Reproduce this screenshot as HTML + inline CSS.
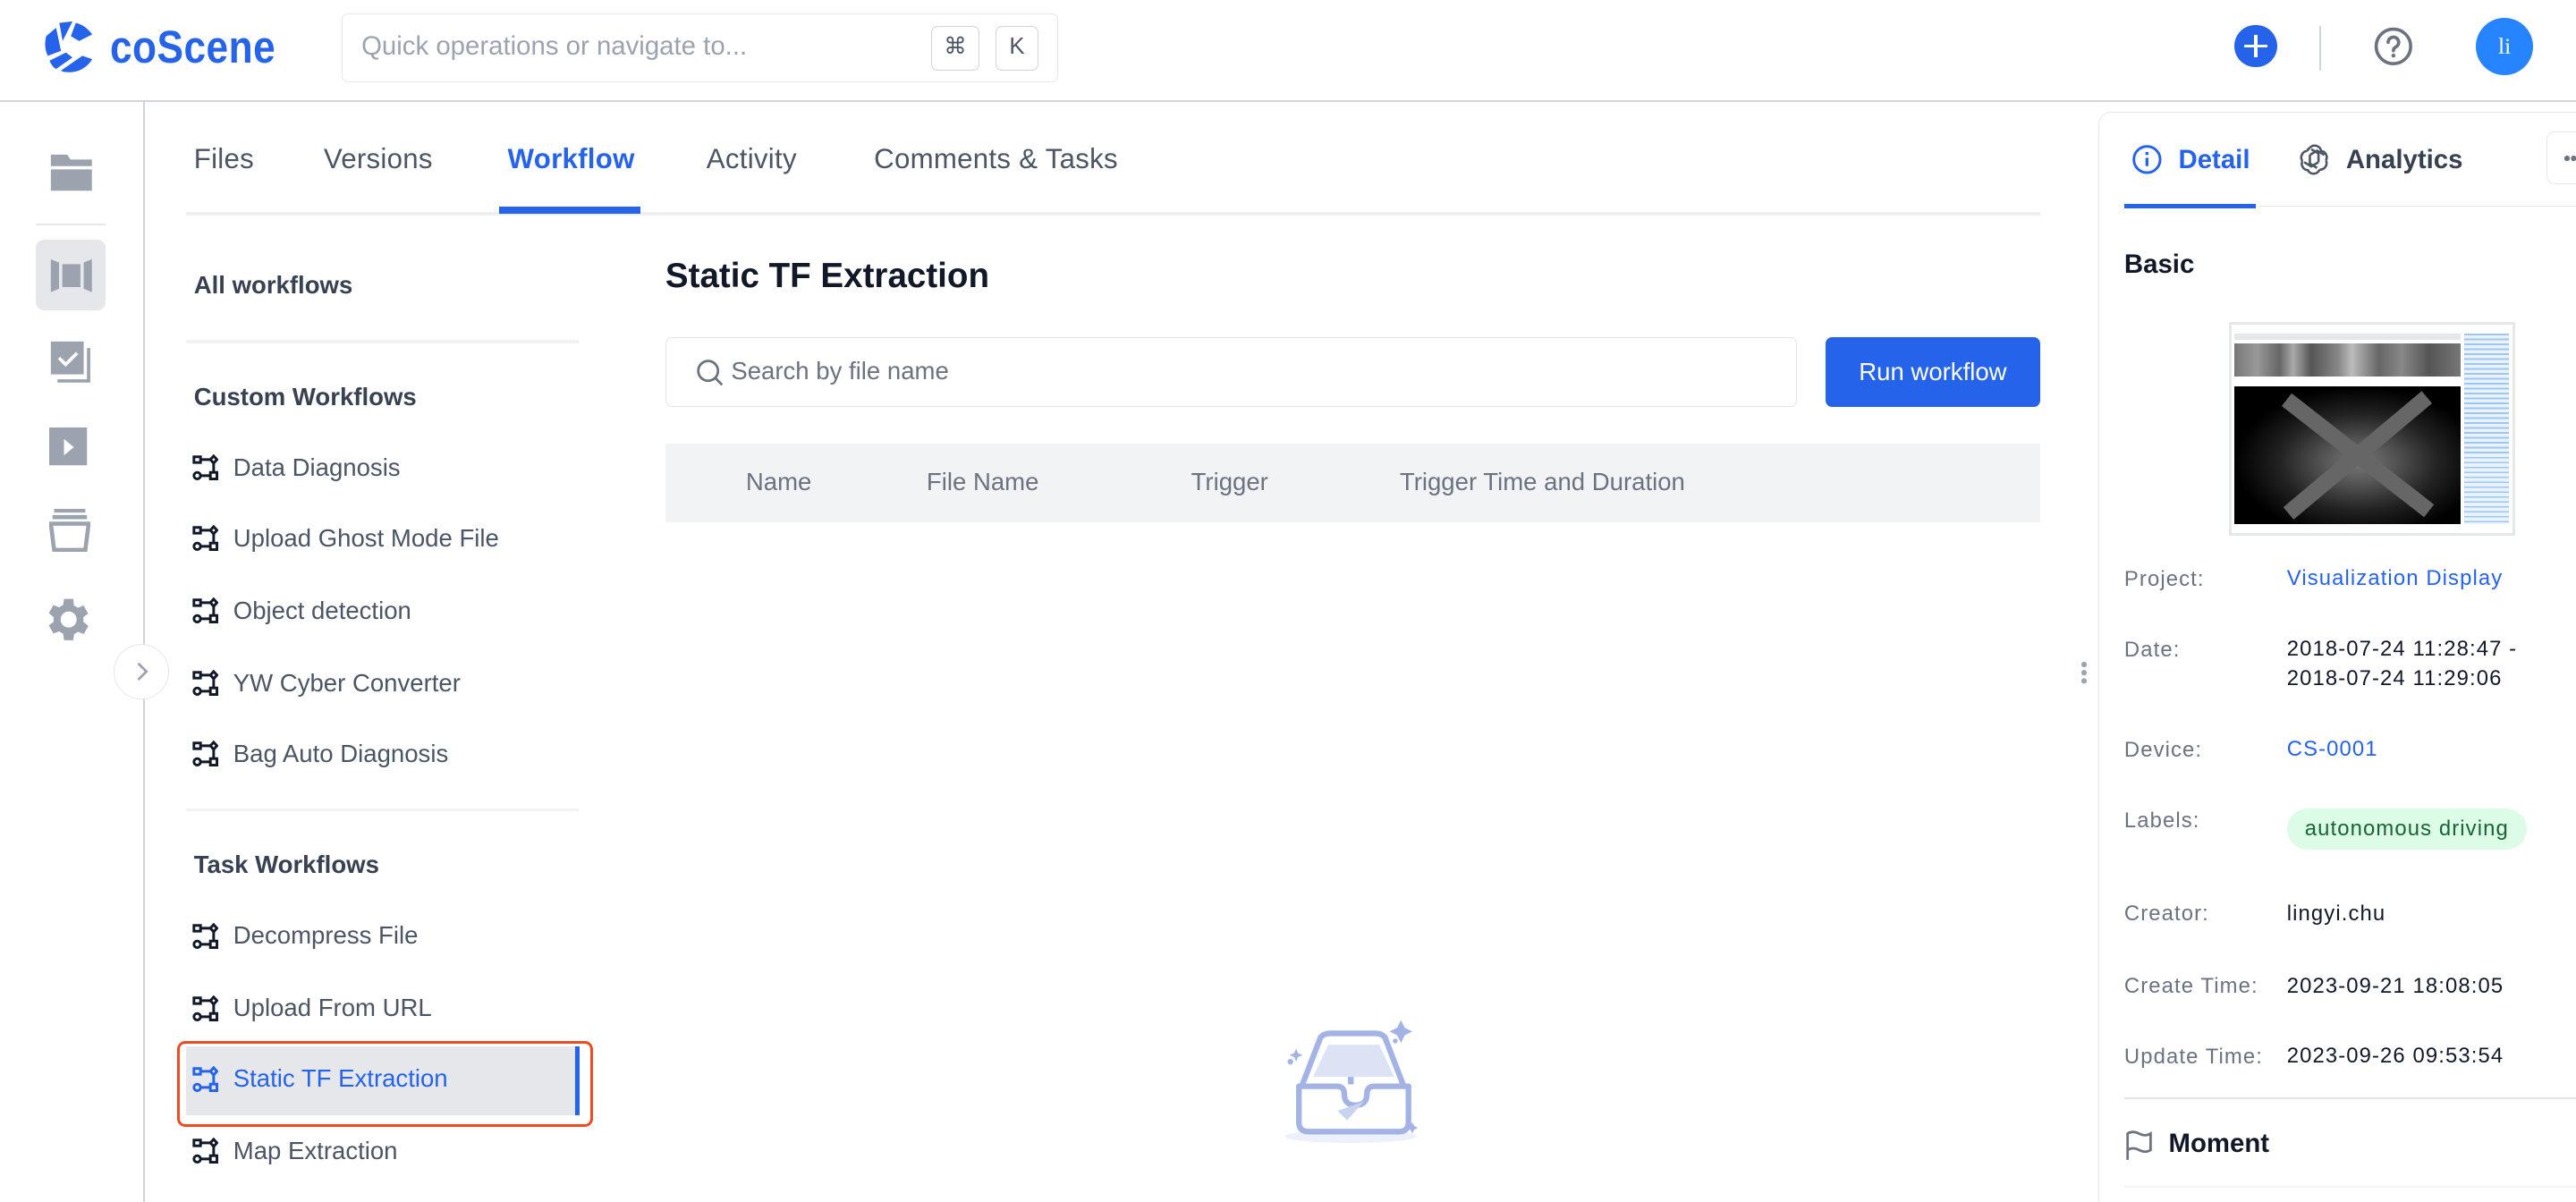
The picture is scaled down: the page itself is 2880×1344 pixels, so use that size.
<!DOCTYPE html>
<html><head><meta charset="utf-8"><style>
*{box-sizing:border-box;margin:0;padding:0}
html,body{width:2880px;height:1344px;overflow:hidden;background:#fff}
#r{zoom:1.836735;width:1568px;height:732px;position:relative;font-family:"Liberation Sans",Arial,sans-serif;color:#374151}
.a{position:absolute;white-space:nowrap}
.tab{position:absolute;top:87px;font-size:17px;color:#4b5563;letter-spacing:.15px}
.it{position:absolute;left:117px;font-size:15px;color:#4b5563;display:flex;align-items:center;gap:9px}
.hd{position:absolute;left:118px;font-size:15px;font-weight:bold;color:#374151}
.lb{position:absolute;left:1293px;font-size:13px;color:#6b7280;letter-spacing:.6px}
.v{position:absolute;left:1392px;font-size:13px;color:#111827;letter-spacing:.6px;line-height:18px}
.th{position:absolute;top:285px;font-size:15px;color:#6b7280}
</style></head><body><div id="r">
<svg class="a" style="left:26px;top:12px" width="32" height="33" viewBox="0 0 32 33"><path d="M10 2 L18 1 L12 13 Z M20 2 C24 3 27 5 30 9 L22 13 L17 10 Z M2 10 L8 5 L11 19 L3 22 C1 18 1 14 2 10 Z M4 25 L14 20 L18 23 L8 30 C6 29 5 27 4 25 Z M11 31 L24 22 L30 24 C27 29 22 32 16 32 C14 32 12 32 11 31 Z" fill="#2563eb"/></svg>
<div class="a" style="left:67px;top:12px;font-size:28px;font-weight:bold;color:#2563eb;transform:scaleX(.86);transform-origin:left;letter-spacing:.3px">coScene</div>
<div class="a" style="left:208px;top:8px;width:436px;height:42px;border:1px solid #e5e7eb;border-radius:4px"></div>
<div class="a" style="left:220px;top:19px;font-size:16px;color:#9ca3af">Quick operations or navigate to...</div>
<div class="a" style="left:567px;top:16px;width:29px;height:27px;border:1px solid #d1d5db;border-radius:4px;text-align:center;font-size:14px;line-height:25px;color:#4b5563">⌘</div>
<div class="a" style="left:606px;top:16px;width:26px;height:27px;border:1px solid #d1d5db;border-radius:4px;text-align:center;font-size:14px;line-height:25px;color:#4b5563">K</div>
<div class="a" style="left:1360px;top:15px;width:26px;height:26px;border-radius:50%;background:#2563eb"></div>
<div class="a" style="left:1366px;top:27px;width:14px;height:2px;background:#fff"></div>
<div class="a" style="left:1372px;top:21px;width:2px;height:14px;background:#fff"></div>
<div class="a" style="left:1412px;top:16px;width:1px;height:27px;background:#d1d5db"></div>
<svg class="a" style="left:1444px;top:15px" width="26" height="26" viewBox="0 0 26 26"><circle cx="13" cy="13" r="10.5" fill="none" stroke="#6b7280" stroke-width="2"/><path d="M9.8 10.5a3.2 3.2 0 1 1 4.6 2.9c-1 .5-1.4 1.1-1.4 2.2" fill="none" stroke="#6b7280" stroke-width="2" stroke-linecap="round"/><circle cx="13" cy="18.6" r="1.2" fill="#6b7280"/></svg>
<div class="a" style="left:1507px;top:11px;width:35px;height:35px;border-radius:50%;background:#2684ff;color:#fff;text-align:center;line-height:35px;font-family:'Liberation Serif',serif;font-size:14px">li</div>
<div class="a" style="left:0;top:61px;width:1568px;height:1px;background:#d1d5db"></div>
<div class="a" style="left:87px;top:62px;width:1px;height:670px;background:#d1d5db"></div>
<svg class="a" style="left:30px;top:93px" width="27" height="24"><path d="M1 1h10l2 3h13v4H1z M1 10h25v13H1z" fill="#9ca3af"/></svg>
<div class="a" style="left:22px;top:136px;width:42px;height:1px;background:#e5e7eb"></div>
<div class="a" style="left:22px;top:146px;width:42px;height:43px;border-radius:5px;background:#e5e7eb"></div>
<svg class="a" style="left:30px;top:157px" width="27" height="22"><path d="M1 1l5 2v16l-5 2z M26 1l-5 2v16l5 2z M8 4h11v14H8z" fill="#9ca3af"/></svg>
<svg class="a" style="left:30px;top:207px" width="26" height="27"><path d="M5 25h19V5" fill="none" stroke="#9ca3af" stroke-width="2"/><rect x="1" y="1" width="20" height="20" fill="#9ca3af"/><path d="M6 11l4 4 7-7" fill="none" stroke="#fff" stroke-width="2"/></svg>
<svg class="a" style="left:30px;top:260px" width="24" height="24"><rect width="23" height="23" fill="#9ca3af"/><path d="M9 7l6 5-6 5z" fill="#fff"/></svg>
<svg class="a" style="left:30px;top:310px" width="25" height="26"><path d="M3 1h19M2 5h21" stroke="#9ca3af" stroke-width="2.5"/><path d="M1 9h23l-2 16H3z" fill="none" stroke="#9ca3af" stroke-width="2.5"/></svg>
<svg class="a" style="left:28px;top:363px" width="28" height="28" viewBox="3 2 20 20"><path fill="#9ca3af" d="M19.4 13a7.5 7.5 0 0 0 0-2l2.1-1.6-2-3.5-2.5 1a7.6 7.6 0 0 0-1.7-1L15 3h-4l-.4 2.7a7.6 7.6 0 0 0-1.700 1l-2.5-1-2 3.5L6.5 11a7.5 7.5 0 0 0 0 2l-2.1 1.6 2 3.5 2.5-1a7.6 7.6 0 0 0 1.7 1L11 21h4l.4-2.7a7.6 7.6 0 0 0 1.7-1l2.5 1 2-3.5zM13 15.5a3.5 3.5 0 1 1 0-7 3.5 3.5 0 0 1 0 7z"/></svg>
<div class="a" style="left:69px;top:392px;width:34px;height:34px;border-radius:50%;border:1px solid #e5e7eb;background:#fff"></div>
<svg class="a" style="left:81px;top:402px" width="10" height="14"><path d="M3 2l5 5-5 5" fill="none" stroke="#9ca3af" stroke-width="1.5"/></svg>
<div class="tab" style="left:118px">Files</div>
<div class="tab" style="left:197px">Versions</div>
<div class="tab" style="left:309px;color:#2563eb;font-weight:bold">Workflow</div>
<div class="tab" style="left:430px">Activity</div>
<div class="tab" style="left:532px">Comments &amp; Tasks</div>
<div class="a" style="left:113px;top:129px;width:1129px;height:2px;background:#eeeff1"></div>
<div class="a" style="left:304px;top:126px;width:86px;height:4px;background:#2563eb"></div>
<div class="hd" style="top:165px">All workflows</div>
<div class="a" style="left:113px;top:207px;width:239px;height:2px;background:#f1f2f4"></div>
<div class="hd" style="top:233px">Custom Workflows</div>
<div class="a" style="left:113px;top:492px;width:239px;height:2px;background:#f1f2f4"></div>
<div class="hd" style="top:518px">Task Workflows</div>
<div class="a" style="left:108px;top:634px;width:253px;height:52px;border:2px solid #f04a23;border-radius:5px"></div>
<div class="a" style="left:113px;top:637px;width:237px;height:42px;background:#e5e7eb"></div>
<div class="a" style="left:350px;top:637px;width:3px;height:42px;background:#2563eb"></div>
<svg width="0" height="0" style="position:absolute"><defs><symbol id="wf" viewBox="0 0 16 16"><g fill="none" stroke="currentColor" stroke-width="1.6"><rect x="1" y="1.5" width="4" height="3.5"/><path d="M5 3.2h6"/><path d="M13 1l2 2.2-2 2.2-2-2.2z"/><path d="M13 5.4v6"/><circle cx="3" cy="13" r="2"/><path d="M5 13h6"/><rect x="11" y="11" width="4" height="4"/></g></symbol></defs></svg>
<div class="it" style="top:276px"><svg width="16" height="16" style="color:#111827"><use href="#wf"/></svg>Data Diagnosis</div>
<div class="it" style="top:319px"><svg width="16" height="16" style="color:#111827"><use href="#wf"/></svg>Upload Ghost Mode File</div>
<div class="it" style="top:363px"><svg width="16" height="16" style="color:#111827"><use href="#wf"/></svg>Object detection</div>
<div class="it" style="top:407px"><svg width="16" height="16" style="color:#111827"><use href="#wf"/></svg>YW Cyber Converter</div>
<div class="it" style="top:450px"><svg width="16" height="16" style="color:#111827"><use href="#wf"/></svg>Bag Auto Diagnosis</div>
<div class="it" style="top:561px"><svg width="16" height="16" style="color:#111827"><use href="#wf"/></svg>Decompress File</div>
<div class="it" style="top:605px"><svg width="16" height="16" style="color:#111827"><use href="#wf"/></svg>Upload From URL</div>
<div class="it" style="top:648px;color:#2563eb"><svg width="16" height="16" style="color:#2563eb"><use href="#wf"/></svg>Static TF Extraction</div>
<div class="it" style="top:692px"><svg width="16" height="16" style="color:#111827"><use href="#wf"/></svg>Map Extraction</div>
<div class="a" style="left:405px;top:156px;font-size:21px;font-weight:bold;color:#111827">Static TF Extraction</div>
<div class="a" style="left:405px;top:205px;width:689px;height:43px;border:1px solid #e2e5ea;border-radius:4px"></div>
<svg class="a" style="left:423px;top:218px" width="18" height="18"><circle cx="8" cy="8" r="6" fill="none" stroke="#6b7280" stroke-width="1.5"/><path d="M12.5 12.5l4 4" stroke="#6b7280" stroke-width="1.5"/></svg>
<div class="a" style="left:445px;top:217px;font-size:15px;color:#6b7280">Search by file name</div>
<div class="a" style="left:1111px;top:205px;width:131px;height:43px;background:#2563eb;border-radius:4px;color:#fff;font-size:15px;text-align:center;line-height:43px">Run workflow</div>
<div class="a" style="left:405px;top:270px;width:837px;height:48px;background:#f2f3f5"></div>
<div class="th" style="left:454px">Name</div>
<div class="th" style="left:564px">File Name</div>
<div class="th" style="left:725px">Trigger</div>
<div class="th" style="left:852px">Trigger Time and Duration</div>
<svg class="a" style="left:758px;top:608px" width="115" height="104" viewBox="0 0 200 180"><ellipse cx="112" cy="145" rx="70" ry="7" fill="#eef0fb"/><path d="M60 92 L80 40 Q84 36 90 36 H138 Q144 36 148 40 L168 92" fill="none" stroke="#a3b3e6" stroke-width="6"/><path d="M72 82 L88 48 H142 L158 82" fill="#dde3f5"/><path d="M112 82v8" stroke="#a3b3e6" stroke-width="6"/><path d="M57 92h40q8 0 8 8 0 12 12 12 12 0 12-12 0-8 8-8h36v38q0 10-10 10H67q-10 0-10-10z" fill="#fff" stroke="#a3b3e6" stroke-width="6" stroke-linejoin="round"/><path d="M98 118l28-10-18 20z" fill="#c9d2ef"/><path d="M165 22l4 8 8 4-8 4-4 8-4-8-8-4 8-4z M54 52l2 5 5 2-5 2-2 5-2-5-5-2 5-2z M177 130l2 4 4 2-4 2-2 4-2-4-4-2 4-2z" fill="#a3b3e6"/><circle cx="48" cy="66" r="3" fill="#a3b3e6"/><circle cx="159" cy="44" r="2.5" fill="#a3b3e6"/></svg>
<div class="a" style="left:1267px;top:403px;width:3px;height:3px;border-radius:50%;background:#9ca3af;box-shadow:0 5px 0 #9ca3af,0 10px 0 #9ca3af"></div>
<div class="a" style="left:1277px;top:68px;width:300px;height:680px;border:1px solid #e5e7eb;border-radius:8px 0 0 0;border-right:none;border-bottom:none"></div>
<svg class="a" style="left:1297px;top:87px" width="20" height="20"><circle cx="10" cy="10" r="8" fill="none" stroke="#2563eb" stroke-width="1.6"/><path d="M10 9v5" stroke="#2563eb" stroke-width="1.8"/><circle cx="10" cy="6.3" r="1" fill="#2563eb"/></svg>
<div class="a" style="left:1326px;top:88px;font-size:16px;font-weight:bold;color:#2563eb">Detail</div>
<svg class="a" style="left:1398px;top:86px" width="21" height="21" viewBox="0 0 24 24"><g fill="none" stroke="#4b5563" stroke-width="1.6"><path d="M9 4.5a4.5 4.5 0 0 1 7.8 2.2 4.5 4.5 0 0 1 3.4 6.6"/><path d="M20.2 13.3a4.5 4.5 0 0 1-4.4 6.4"/><path d="M15.8 19.7a4.5 4.5 0 0 1-8.2 0.4 4.5 4.5 0 0 1-3.8-6.4"/><path d="M3.8 13.7a4.5 4.5 0 0 1 3.4-7"/><path d="M7.2 6.7a4.5 4.5 0 0 1 1.8-2.2"/><path d="M9 9.5v6l5 3M15 14.5v-6l-5-3M9 9.5l5-3 5 3M15 14.5l-5 3-5-3"/></g></svg>
<div class="a" style="left:1428px;top:88px;font-size:16px;font-weight:bold;color:#374151">Analytics</div>
<div class="a" style="left:1550px;top:80px;width:30px;height:32px;border:1px solid #e5e7eb;border-radius:5px"></div>
<div class="a" style="left:1561px;top:95px;width:3px;height:3px;border-radius:50%;background:#6b7280;box-shadow:4px 0 0 #6b7280"></div>
<div class="a" style="left:1293px;top:125px;width:275px;height:1px;background:#e5e7eb"></div>
<div class="a" style="left:1293px;top:124px;width:80px;height:3px;background:#2563eb"></div>
<div class="a" style="left:1293px;top:152px;font-size:16px;font-weight:bold;color:#111827">Basic</div>
<div class="a" style="left:1357px;top:196px;width:174px;height:130px;border:2px solid #e5e7eb;background:#fff"></div>
<div class="a" style="left:1360px;top:203px;width:138px;height:4px;background:#e5e7eb"></div>
<div class="a" style="left:1360px;top:209px;width:138px;height:20px;background:linear-gradient(90deg,#777 0,#999 10%,#666 20%,#aaa 26%,#555 34%,#888 46%,#bbb 52%,#666 64%,#888 74%,#555 86%,#777 100%)"></div>
<div class="a" style="left:1360px;top:235px;width:138px;height:84px;background:radial-gradient(ellipse at 55% 55%,#777 0,#555 20%,#222 45%,#000 70%)"></div>
<div class="a" style="left:1380px;top:272px;width:110px;height:10px;background:#666;transform:rotate(38deg)"></div>
<div class="a" style="left:1380px;top:272px;width:110px;height:10px;background:#666;transform:rotate(-40deg)"></div>
<div class="a" style="left:1500px;top:203px;width:27px;height:116px;background:repeating-linear-gradient(180deg,#9cc7f3 0,#9cc7f3 1px,#eaf3fd 1px,#eaf3fd 3px)"></div>
<div class="lb" style="top:345px">Project:</div><div class="v" style="top:343px;color:#2563eb">Visualization Display</div>
<div class="lb" style="top:388px">Date:</div><div class="v" style="top:386px">2018-07-24 11:28:47 -<br>2018-07-24 11:29:06</div>
<div class="lb" style="top:449px">Device:</div><div class="v" style="top:447px;color:#2563eb">CS-0001</div>
<div class="lb" style="top:492px">Labels:</div>
<div class="a" style="left:1392px;top:492px;width:146px;height:25px;border-radius:13px;background:#dcfce7;color:#166534;font-size:13px;letter-spacing:.6px;text-align:center;line-height:25px">autonomous driving</div>
<div class="lb" style="top:549px">Creator:</div><div class="v" style="top:547px">lingyi.chu</div>
<div class="lb" style="top:593px">Create Time:</div><div class="v" style="top:591px">2023-09-21 18:08:05</div>
<div class="lb" style="top:636px">Update Time:</div><div class="v" style="top:634px">2023-09-26 09:53:54</div>
<div class="a" style="left:1293px;top:668px;width:275px;height:1px;background:#e2e5ea"></div>
<svg class="a" style="left:1293px;top:687px" width="18" height="20"><path d="M2 19V3q3-2 7 0t7 0v10q-3 2-7 0t-7 0" fill="none" stroke="#6b7280" stroke-width="1.5"/></svg>
<div class="a" style="left:1320px;top:687px;font-size:16px;font-weight:bold;color:#111827">Moment</div>
<div class="a" style="left:1293px;top:722px;width:275px;height:1px;background:#f3f4f6"></div>
</div></body></html>
